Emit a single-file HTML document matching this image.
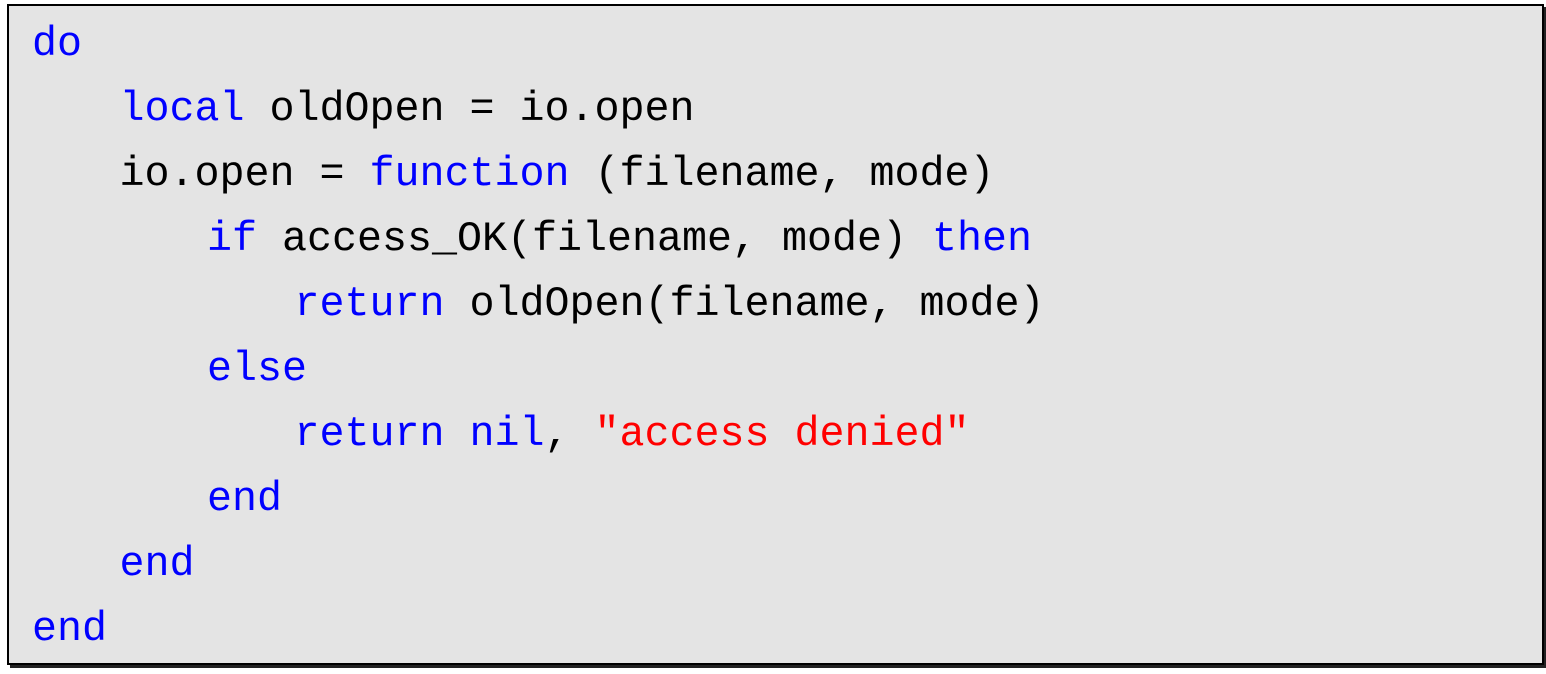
<!DOCTYPE html>
<html><head><meta charset="utf-8"><style>
html,body{margin:0;padding:0;background:#fff;width:1546px;height:674px;overflow:hidden}
.box{position:absolute;left:7px;top:4px;width:1533px;height:657px;background:#e4e4e4;border:2px solid #000;box-shadow:3px 3px 0 #222}
pre{position:absolute;left:23px;top:6px;margin:0;font-family:"Liberation Mono",monospace;font-size:41.67px;line-height:65px;color:#000;white-space:pre}
.k{color:#0000ff}.s{color:#ff0000}
.l1{padding-left:87.5px;display:inline-block}
.l2{padding-left:175px;display:inline-block}
.l3{padding-left:262.5px;display:inline-block}
</style></head><body>
<div class="box"><pre><span class="k">do</span>
<span class="l1"><span class="k">local</span> oldOpen = io.open</span>
<span class="l1">io.open = <span class="k">function</span> (filename, mode)</span>
<span class="l2"><span class="k">if</span> access_OK(filename, mode) <span class="k">then</span></span>
<span class="l3"><span class="k">return</span> oldOpen(filename, mode)</span>
<span class="l2"><span class="k">else</span></span>
<span class="l3"><span class="k">return</span> <span class="k">nil</span>, <span class="s">"access denied"</span></span>
<span class="l2"><span class="k">end</span></span>
<span class="l1"><span class="k">end</span></span>
<span class="k">end</span></pre></div>
</body></html>
